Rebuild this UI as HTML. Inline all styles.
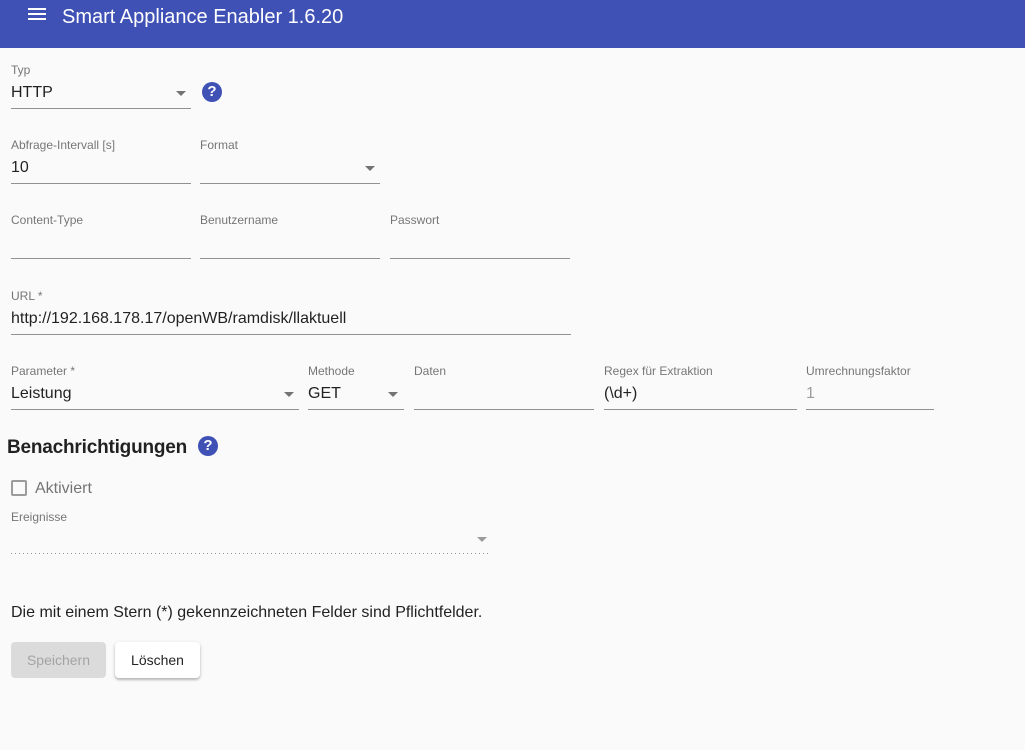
<!DOCTYPE html>
<html><head><meta charset="utf-8"><style>
body{margin:0;width:1025px;height:750px;background:#fafafa;font-family:"Liberation Sans",Arial,sans-serif;position:relative;overflow:hidden}
.hdr{position:absolute;left:0;top:0;width:1025px;height:48px;background:#3f51b5}
.menu{position:absolute;left:28px;width:18px;height:2px;background:#fff}
.title{position:absolute;left:62px;top:6px;color:#fff;font-size:20px}
.lab{position:absolute;font-size:12px;color:rgba(0,0,0,.54);white-space:nowrap}
.val{position:absolute;font-size:16px;color:rgba(0,0,0,.87);white-space:nowrap}
.line{position:absolute;height:1px;background:rgba(0,0,0,.42)}
.arr{position:absolute;width:0;height:0;border-left:5px solid transparent;border-right:5px solid transparent;border-top:5px solid rgba(0,0,0,.54)}
.help{position:absolute;width:20px;height:20px;border-radius:50%;background:#3f51b5;color:#fff;font-weight:bold;font-size:15px;text-align:center;line-height:20px}
</style></head><body>
<div class="hdr">
<div class="menu" style="top:8px"></div><div class="menu" style="top:13px"></div><div class="menu" style="top:18px"></div>
<div class="title">Smart Appliance Enabler 1.6.20</div>
</div>

<div class="lab" style="left:11px;top:63px">Typ</div>
<div class="val" style="left:11px;top:84px">HTTP</div>
<div class="arr" style="left:176px;top:91px"></div>
<div class="line" style="left:11px;top:108px;width:180px"></div>
<div class="help" style="left:202px;top:82px">?</div>

<div class="lab" style="left:11px;top:138px">Abfrage-Intervall [s]</div>
<div class="val" style="left:11px;top:159px">10</div>
<div class="line" style="left:11px;top:183px;width:180px"></div>
<div class="lab" style="left:200px;top:138px">Format</div>
<div class="arr" style="left:365px;top:166px"></div>
<div class="line" style="left:200px;top:183px;width:180px"></div>

<div class="lab" style="left:11px;top:213px">Content-Type</div>
<div class="line" style="left:11px;top:258px;width:180px"></div>
<div class="lab" style="left:200px;top:213px">Benutzername</div>
<div class="line" style="left:200px;top:258px;width:180px"></div>
<div class="lab" style="left:390px;top:213px">Passwort</div>
<div class="line" style="left:390px;top:258px;width:180px"></div>

<div class="lab" style="left:11px;top:289px">URL *</div>
<div class="val" style="left:11px;top:310px">http://192.168.178.17/openWB/ramdisk/llaktuell</div>
<div class="line" style="left:11px;top:334px;width:560px"></div>

<div class="lab" style="left:11px;top:364px">Parameter *</div>
<div class="val" style="left:11px;top:385px">Leistung</div>
<div class="arr" style="left:284px;top:392px"></div>
<div class="line" style="left:11px;top:409px;width:288px"></div>
<div class="lab" style="left:308px;top:364px">Methode</div>
<div class="val" style="left:308px;top:385px">GET</div>
<div class="arr" style="left:388px;top:392px"></div>
<div class="line" style="left:308px;top:409px;width:96px"></div>
<div class="lab" style="left:414px;top:364px">Daten</div>
<div class="line" style="left:414px;top:409px;width:180px"></div>
<div class="lab" style="left:604px;top:364px">Regex für Extraktion</div>
<div class="val" style="left:604px;top:385px">(\d+)</div>
<div class="line" style="left:604px;top:409px;width:193px"></div>
<div class="lab" style="left:806px;top:364px">Umrechnungsfaktor</div>
<div class="val" style="left:806px;top:385px;color:rgba(0,0,0,.38)">1</div>
<div class="line" style="left:806px;top:409px;width:128px"></div>

<div style="position:absolute;left:7px;top:437px;font-size:19px;font-weight:bold;letter-spacing:-0.2px;color:rgba(0,0,0,.87)">Benachrichtigungen</div>
<div class="help" style="left:198px;top:436px">?</div>

<div style="position:absolute;left:11px;top:480px;width:12px;height:12px;border:2px solid rgba(0,0,0,.38);border-radius:2px"></div>
<div class="val" style="left:35px;top:480px;color:rgba(0,0,0,.54)">Aktiviert</div>
<div class="lab" style="left:11px;top:510px">Ereignisse</div>
<div class="arr" style="left:477px;top:537px;border-top-color:rgba(0,0,0,.38)"></div>
<div style="position:absolute;left:11px;top:553px;width:478px;height:1px;background:repeating-linear-gradient(90deg,rgba(0,0,0,.42) 0 1px,transparent 1px 4px)"></div>

<div class="val" style="left:11px;top:604px;font-size:16px">Die mit einem Stern (*) gekennzeichneten Felder sind Pflichtfelder.</div>

<div style="position:absolute;left:11px;top:642px;width:95px;height:36px;background:rgba(0,0,0,.12);border-radius:4px;color:rgba(0,0,0,.26);font-size:14px;text-align:center;line-height:36px">Speichern</div>
<div style="position:absolute;left:115px;top:642px;width:85px;height:36px;background:#fff;border-radius:4px;box-shadow:0 2px 2px rgba(0,0,0,.2),0 1px 4px rgba(0,0,0,.12);color:rgba(0,0,0,.87);font-size:14px;text-align:center;line-height:36px">Löschen</div>
</body></html>
